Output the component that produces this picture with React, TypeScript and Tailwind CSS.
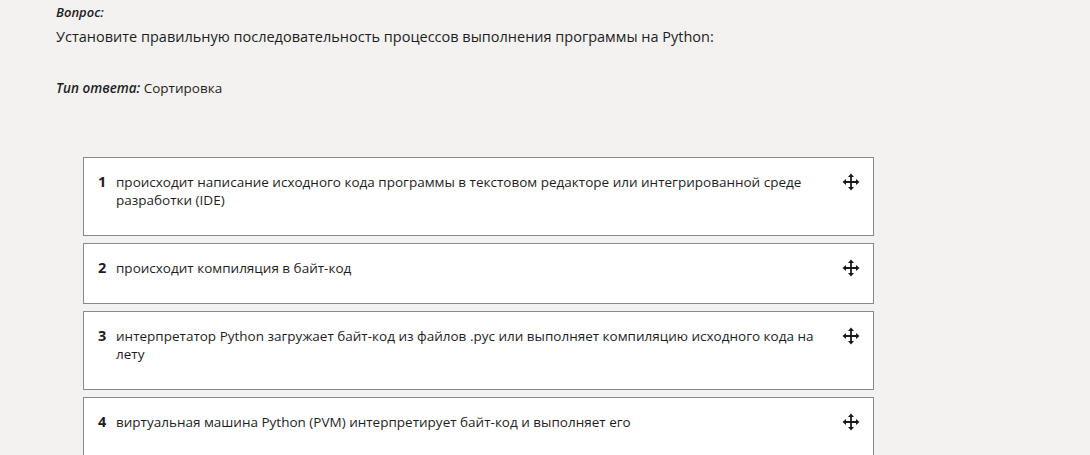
import React from 'react';

const items = [
  'происходит написание исходного кода программы в текстовом редакторе или интегрированной среде разработки (IDE)',
  'происходит компиляция в байт-код',
  'интерпретатор Python загружает байт-код из файлов .pyc или выполняет компиляцию исходного кода на лету',
  'виртуальная машина Python (PVM) интерпретирует байт-код и выполняет его',
];

function MoveIcon() {
  return (
    <svg width="18" height="18" viewBox="0 0 18 18" className="shrink-0">
      <path d="M9 2.5V15.5M2.5 9H15.5" stroke="#1a1a1a" strokeWidth="1.8" />
      <path d="M9 0.5L6 4H12Z" fill="#1a1a1a" />
      <path d="M9 17.5L6 14H12Z" fill="#1a1a1a" />
      <path d="M0.5 9L4 6V12Z" fill="#1a1a1a" />
      <path d="M17.5 9L14 6V12Z" fill="#1a1a1a" />
    </svg>
  );
}

export default function App() {
  return (
    <div
      className="min-h-[455px] w-[1090px] overflow-hidden bg-[#f3f2f0] text-[#1e1e1e]"
      style={{ fontFamily: '"Open Sans", "Noto Sans", sans-serif' }}
    >
      <div className="pl-[56px] pt-[3px]">
        <div className="text-[13px] font-semibold italic leading-[18px]">Вопрос:</div>
        <div className="mt-[6px] text-[14.5px] leading-[20px]">
          Установите правильную последовательность процессов выполнения программы на Python:
        </div>
        <div className="mt-[32px] text-[13.5px] leading-[18px]">
          <span className="font-semibold italic">Тип ответа:</span> Сортировка
        </div>
      </div>

      <div className="ml-[83px] mt-[60px] flex w-[791px] flex-col gap-[7px]">
        {items.map((text, i) => (
          <div
            key={i}
            className="flex items-start border border-[#8a8a8a] bg-white pb-[26px] pl-[14px] pr-[12px] pt-[15px]"
          >
            <span className="w-[18px] shrink-0 text-[14.5px] font-bold leading-[18px]">{i + 1}</span>
            <span className="flex-1 pr-[10px] text-[13.5px] leading-[18px]">{text}</span>
            <span className="mr-[1px]">
              <MoveIcon />
            </span>
          </div>
        ))}
      </div>
    </div>
  );
}
